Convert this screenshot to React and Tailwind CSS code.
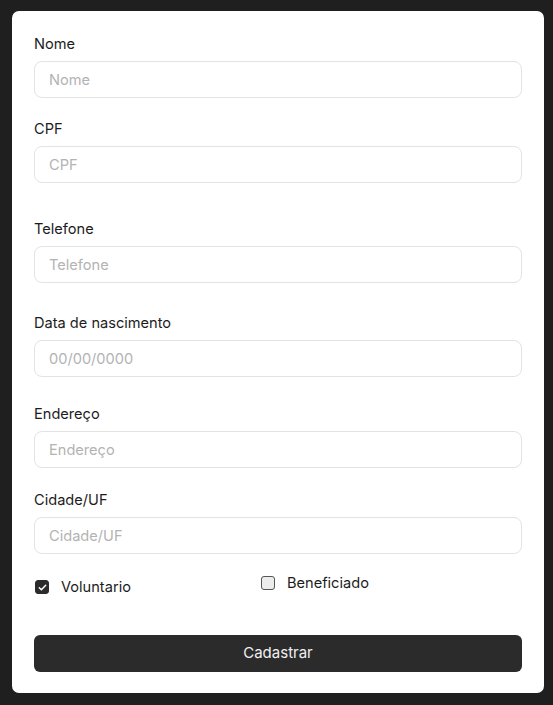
import React, { useState } from "react";

const Field = ({ label, placeholder, className = "" }) => (
  <div className={className}>
    <label className="block text-[14.6px] leading-5 text-[#1c1c1c]">{label}</label>
    <input
      type="text"
      placeholder={placeholder}
      className="mt-[7px] w-full h-[37px] px-[14px] text-[14.6px] rounded-[8px] border border-[#e3e3e3] outline-none placeholder:text-[#b3b3b3] text-[#1c1c1c]"
    />
  </div>
);

const Check = ({ checked, onChange, label, className = "" }) => (
  <label className={`flex items-center cursor-pointer ${className}`}>
    <span
      onClick={onChange}
      className={`flex items-center justify-center w-[14px] h-[14px] rounded-[3px] border ${
        checked ? "bg-[#2b2b2b] border-[#2b2b2b]" : "bg-[#ececec] border-[#555555]"
      }`}
    >
      {checked && (
        <svg viewBox="0 0 12 12" className="w-[11px] h-[11px]">
          <path d="M2.5 6.2l2.3 2.3 4.7-4.9" fill="none" stroke="white" strokeWidth="1.6" strokeLinecap="round" strokeLinejoin="round" />
        </svg>
      )}
    </span>
    <span className="ml-[12px] text-[14.6px] leading-5 text-[#1c1c1c]">{label}</span>
  </label>
);

export default function App() {
  const [voluntario, setVoluntario] = useState(true);
  const [beneficiado, setBeneficiado] = useState(false);

  return (
    <div className="min-h-[705px] bg-[#1f1f1f] pt-[11px] pl-[12px] pr-[9px] pb-[12px] font-['Inter',sans-serif]">
      <form
        onSubmit={(e) => e.preventDefault()}
        className="bg-white rounded-[7px] px-[22px] pt-[23px] pb-[21px]"
      >
        <Field label="Nome" placeholder="Nome" />
        <Field label="CPF" placeholder="CPF" className="mt-[21px]" />
        <Field label="Telefone" placeholder="Telefone" className="mt-[36px]" />
        <Field label="Data de nascimento" placeholder="00/00/0000" className="mt-[30px]" />
        <Field label="Endereço" placeholder="Endereço" className="mt-[27px]" />
        <Field label="Cidade/UF" placeholder="Cidade/UF" className="mt-[22px]" />

        <div className="flex items-start mt-[22px] pl-[1px]">
          <Check
            checked={voluntario}
            onChange={() => setVoluntario(!voluntario)}
            label="Voluntario"
            className="w-[226px] mt-[1px]"
          />
          <Check
            checked={beneficiado}
            onChange={() => setBeneficiado(!beneficiado)}
            label="Beneficiado"
            className="-mt-[3px]"
          />
        </div>

        <button
          type="submit"
          className="mt-[38px] w-full h-[37px] rounded-[6px] bg-[#2b2b2b] text-[#f0f0f0] text-[15px]"
        >
          Cadastrar
        </button>
      </form>
    </div>
  );
}
